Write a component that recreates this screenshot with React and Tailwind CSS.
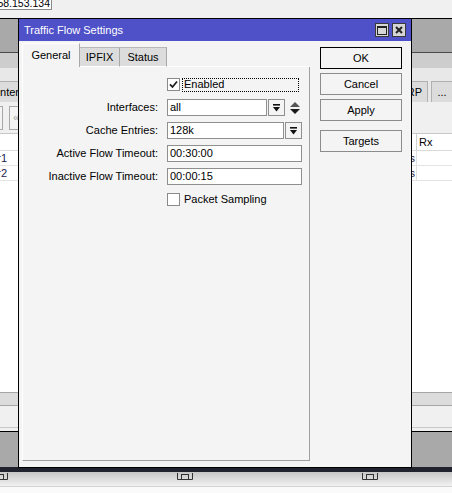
import React from "react";

function Check({ checked }) {
  return (
    <div className="w-[13px] h-[13px] shrink-0 bg-white border border-[#8a8a8a] flex items-center justify-center">
      {checked && (
        <svg width="9" height="9" viewBox="0 0 9 9">
          <path d="M1 4.3 L3.5 7 L8 1.5" stroke="#1a1a1a" strokeWidth="1.7" fill="none" />
        </svg>
      )}
    </div>
  );
}

function DropBtn() {
  return (
    <div className="w-[17px] h-[17px] shrink-0 border border-[#8f8f8f] bg-[#f4f4f4] flex items-center justify-center">
      <svg width="7" height="8" viewBox="0 0 7 8">
        <rect x="0" y="0" width="7" height="1.6" fill="#111" />
        <polygon points="0,3 7,3 3.5,7.5" fill="#111" />
      </svg>
    </div>
  );
}

function Field({ width, value }) {
  return (
    <div
      className="h-[17px] shrink-0 bg-white border border-[#8f8f8f] flex items-center pl-[2px] leading-none"
      style={{ width }}
    >
      {value}
    </div>
  );
}

function Row({ label, children }) {
  return (
    <div className="flex items-center h-[17px]">
      <div className="w-[135px] shrink-0 text-right whitespace-nowrap">{label}</div>
      <div className="ml-[9px] flex items-center">{children}</div>
    </div>
  );
}

function Btn({ children, def }) {
  return (
    <div
      className={
        def
          ? "h-[22px] w-[82px] border border-black bg-[#f4f4f4] flex items-center justify-center"
          : "h-[22px] w-[82px] border border-[#8c8c8c] bg-[#f4f4f4] flex items-center justify-center"
      }
    >
      {children}
    </div>
  );
}

function TaskIcon() {
  return (
    <svg width="16" height="7" viewBox="0 0 16 7" className="shrink-0">
      <path d="M0.5 0V6.5H15.5V0" stroke="#333" fill="none" />
      <rect x="4.5" y="1.5" width="7" height="5" stroke="#333" fill="none" />
    </svg>
  );
}

function Background() {
  return (
    <div className="flex flex-col w-[452px] h-[493px]">
      <div className="h-[18px] shrink-0 bg-[#f0f0f0]">
        <div className="w-[52px] h-[10px] bg-white border-r border-b border-[#8a8a8a] overflow-hidden flex justify-end pr-px">
          <span className="text-[10.5px] leading-[11px] -mt-[2px] whitespace-nowrap">158.153.134</span>
        </div>
      </div>
      <div className="h-px shrink-0 bg-black" />
      <div className="h-[33px] shrink-0 bg-[#a9a9a9]" />
      <div className="h-px shrink-0 bg-[#4a4a4a]" />
      <div className="h-[15px] shrink-0 bg-[#cdcdcd]" />
      <div className="h-[13px] shrink-0 bg-[#e8e8e8]" />
      <div className="h-[21px] shrink-0 bg-[#e8e8e8] flex items-end justify-between">
        <div className="w-[30px] h-[21px] bg-[#dcdcdc] border-t border-r border-[#b0b0b0] flex items-center overflow-hidden">
          <span className="-ml-[3px] whitespace-nowrap">Interfaces</span>
        </div>
        <div className="flex h-[21px]">
          <div className="h-full px-[5px] bg-[#dcdcdc] border-t border-l border-r border-[#b0b0b0] flex items-center">
            VRRP
          </div>
          <div className="ml-[3px] w-[21px] h-full bg-[#dcdcdc] border-t border-l border-[#b0b0b0] flex items-center justify-center">
            ...
          </div>
        </div>
      </div>
      <div className="h-[31px] shrink-0 bg-[#f0f0f0] flex items-center gap-[6px]">
        <div className="w-[3px] h-[24px] border-y border-r border-[#a8a8a8] bg-[#f4f4f4]" />
        <div className="w-[24px] h-[24px] border border-[#a8a8a8] bg-[#f4f4f4] flex items-center pl-[3px] text-[#a0a0a0]">
          «
        </div>
      </div>
      <div className="h-[18px] shrink-0 bg-white border-t border-[#c8c8c8] border-b border-b-[#dadada] flex">
        <div className="w-[417px] border-r border-[#d0d0d0]" />
        <div className="pl-[2px] flex items-center">Rx</div>
      </div>
      {["1", "2"].map((n) => (
        <div key={n} className="h-[15px] shrink-0 bg-white border-b border-[#e4e4e4] flex">
          <div className="w-[7px] overflow-hidden flex justify-end items-center">
            <span className="whitespace-nowrap text-[#1c1c50]">ether{n}</span>
          </div>
          <div className="w-[410px] border-r border-[#e0e0e0] flex justify-end items-center pr-[1px] overflow-hidden">
            <span className="whitespace-nowrap text-[#1c1c50]">0 bps</span>
          </div>
        </div>
      ))}
      <div className="flex-1 bg-white" />
      <div className="h-px shrink-0 bg-[#a6a6a6]" />
      <div className="h-[12px] shrink-0 bg-[#dcdcdc]" />
      <div className="h-px shrink-0 bg-[#a6a6a6]" />
      <div className="h-[21px] shrink-0 bg-[#f0f0f0]" />
      <div className="h-px shrink-0 bg-[#c8c8c8]" />
      <div className="h-[3px] shrink-0 bg-[#f0f0f0]" />
      <div className="h-px shrink-0 bg-black" />
      <div className="h-[35px] shrink-0 bg-[#a9a9a9]" />
      <div className="h-[5px] shrink-0 bg-[#20222e]" />
      <div className="h-[14px] shrink-0 bg-gradient-to-b from-[#c6c6c6] to-[#f2f2f2] flex items-start pt-[1px] -ml-[8px] gap-[169px]">
        <TaskIcon />
        <TaskIcon />
        <TaskIcon />
      </div>
      <div className="h-px shrink-0 bg-[#d4d4d4]" />
      <div className="h-[6px] shrink-0 bg-[#fafafa]" />
    </div>
  );
}

function Dialog() {
  return (
    <div className="absolute left-[18px] top-[18px] w-[394px] h-[450px] border border-black bg-[#f4f4f4] flex flex-col">
      <div className="h-[22px] shrink-0 bg-[#4f51c8] flex items-center pl-[5px] pr-[5px] text-white">
        <span>Traffic Flow Settings</span>
        <div className="ml-auto flex gap-[3px]">
          <div className="w-[14px] h-[14px] bg-[#d6d6d6] border border-[#3a3a3a] flex items-center justify-center">
            <svg width="10" height="9" viewBox="0 0 10 9">
              <rect x="0.5" y="0.5" width="9" height="8" stroke="#222" fill="none" />
              <rect x="0" y="0" width="10" height="2" fill="#222" />
            </svg>
          </div>
          <div className="w-[14px] h-[14px] bg-[#d6d6d6] border border-[#3a3a3a] flex items-center justify-center">
            <svg width="8" height="8" viewBox="0 0 8 8">
              <path d="M1 1 L7 7 M7 1 L1 7" stroke="#222" strokeWidth="2" />
            </svg>
          </div>
        </div>
      </div>
      <div className="flex pl-[3px] pt-[2px]">
        <div className="flex flex-col w-[288px]">
          <div className="h-[24px] flex items-end">
            <div className="w-[58px] h-[24px] bg-[#f4f4f4] border-l border-t border-r border-l-white border-t-white border-r-[#a8a8a8] flex items-center justify-center pb-[1px]">
              General
            </div>
            <div className="w-[40px] h-[20px] bg-[#dcdcdc] border-t border-r border-b border-t-[#b8b8b8] border-r-[#a8a8a8] border-b-white flex items-center justify-center">
              IPFIX
            </div>
            <div className="w-[47px] h-[20px] bg-[#dcdcdc] border-t border-r border-b border-t-[#b8b8b8] border-r-[#a8a8a8] border-b-white flex items-center justify-center">
              Status
            </div>
            <div className="flex-1 h-px bg-white" />
          </div>
          <div className="h-[394px] border-l border-r border-b border-l-white border-r-[#a0a0a0] border-b-[#a0a0a0] pt-[9px] flex flex-col gap-[6px]">
            <Row label="">
              <Check checked />
              <div className="ml-[2px] w-[117px] h-[14px] border border-dotted border-black flex items-center pl-[1px]">
                Enabled
              </div>
            </Row>
            <Row label="Interfaces:">
              <Field width={100} value="all" />
              <div className="ml-px">
                <DropBtn />
              </div>
              <svg width="10" height="12" viewBox="0 0 10 12" className="ml-[5px]">
                <polygon points="5,0 10,5 0,5" fill="#555" />
                <polygon points="0,7 10,7 5,12" fill="#1a1a1a" />
              </svg>
            </Row>
            <Row label="Cache Entries:">
              <Field width={117} value="128k" />
              <div className="ml-px">
                <DropBtn />
              </div>
            </Row>
            <Row label="Active Flow Timeout:">
              <Field width={135} value="00:30:00" />
            </Row>
            <Row label="Inactive Flow Timeout:">
              <Field width={135} value="00:00:15" />
            </Row>
            <Row label="">
              <Check />
              <span className="ml-[4px] whitespace-nowrap">Packet Sampling</span>
            </Row>
          </div>
        </div>
        <div className="ml-[10px] mt-[4px] flex flex-col gap-[4px]">
          <Btn def>OK</Btn>
          <Btn>Cancel</Btn>
          <Btn>Apply</Btn>
          <div className="mt-[5px]">
            <Btn>Targets</Btn>
          </div>
        </div>
      </div>
    </div>
  );
}

export default function App() {
  return (
    <div className="relative w-[452px] h-[493px] overflow-hidden bg-white font-['Liberation_Sans',Arial,sans-serif] text-[11px] text-black">
      <Background />
      <Dialog />
    </div>
  );
}
